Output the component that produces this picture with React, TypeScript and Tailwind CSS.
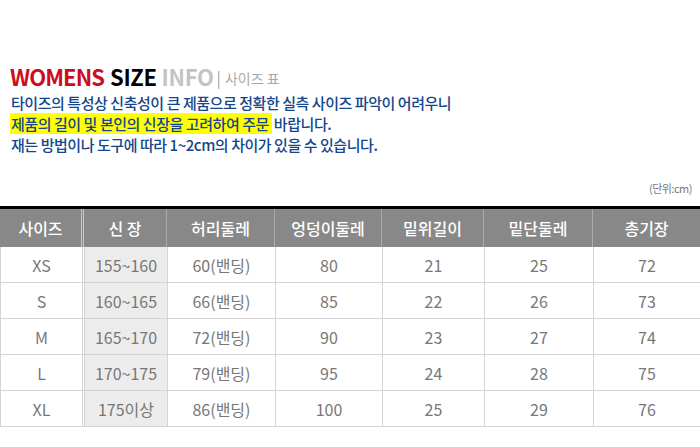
const font = "font-['Noto_Sans_CJK_KR','Noto_Sans',sans-serif]"

const headers = ['사이즈', '신 장', '허리둘레', '엉덩이둘레', '밑위길이', '밑단둘레', '총기장']
const rows = [
  ['XS', '155~160', '60(밴딩)', '80', '21', '25', '72'],
  ['S', '160~165', '66(밴딩)', '85', '22', '26', '73'],
  ['M', '165~170', '72(밴딩)', '90', '23', '27', '74'],
  ['L', '170~175', '79(밴딩)', '95', '24', '28', '75'],
  ['XL', '175이상', '86(밴딩)', '100', '25', '29', '76'],
]

const cols = 'grid grid-cols-[84px_83px_108px_107px_102px_109px_1fr]'

export default function App() {
  return (
    <div className={`w-[700px] h-[447px] bg-white overflow-hidden ${font}`}>
      <div className="pt-[60px] pl-[10px] flex items-end h-[87px]">
        <span className="text-[22px] font-bold tracking-[-0.9px] text-[#cc0e1c] leading-none">WOMENS</span>
        <span className="text-[22px] font-bold tracking-[-0.4px] text-black leading-none ml-[6px]">SIZE</span>
        <span className="text-[22px] font-bold tracking-[-0.3px] text-[#c4c4c4] leading-none ml-[5px]">INFO</span>
        <span className="text-[16px] text-[#a0a0a0] leading-none ml-[3px] mb-[2px]">|</span>
        <span className="text-[14px] text-[#a8a8a8] leading-none ml-[4px] mb-[2px]">사이즈 표</span>
      </div>
      <div className="pl-[11px] pt-[5px] text-[15px] leading-[21px] text-[#14468c] tracking-[-0.45px] font-medium">
        <p>타이즈의 특성상 신축성이 큰 제품으로 정확한 실측 사이즈 파악이 어려우니</p>
        <p>
          <span className="bg-[#ffff00] pr-[3px] -ml-[1px] pl-[1px]">제품의 길이 및 본인의 신장을 고려하여 주문</span>
          <span className="ml-[2px]">바랍니다.</span>
        </p>
        <p>재는 방법이나 도구에 따라 1~2cm의 차이가 있을 수 있습니다.</p>
      </div>
      <div className="flex justify-end pr-[8px] pt-[26px] text-[11px] leading-[14px] text-[#777] tracking-[-0.5px]">
        (단위:cm)
      </div>
      <div className="mt-[11px] border-t-[3px] border-black">
        <div className={`${cols} bg-[#888888] h-[38px] text-white text-[16px] font-medium`}>
          {headers.map((h, i) => (
            <div
              key={h}
              className={`flex items-center justify-center ${i === 0 ? 'border-r-[3px] border-double border-[#c8c8c8]' : i < 6 ? 'border-r border-[#aaaaaa]' : ''}`}
            >
              {h}
            </div>
          ))}
        </div>
        {rows.map((r) => (
          <div key={r[0]} className={`${cols} h-[36px] text-[16px] text-[#777] border-b border-[#d4d4d4] border-l`}>
            {r.map((c, i) => (
              <div
                key={i}
                className={`flex items-center justify-center ${i === 1 ? 'bg-[#ececec]' : ''} ${i === 0 ? 'border-r-[3px] border-double border-[#d4d4d4]' : i < 6 ? 'border-r border-[#d4d4d4]' : ''}`}
              >
                {c}
              </div>
            ))}
          </div>
        ))}
      </div>
    </div>
  )
}
